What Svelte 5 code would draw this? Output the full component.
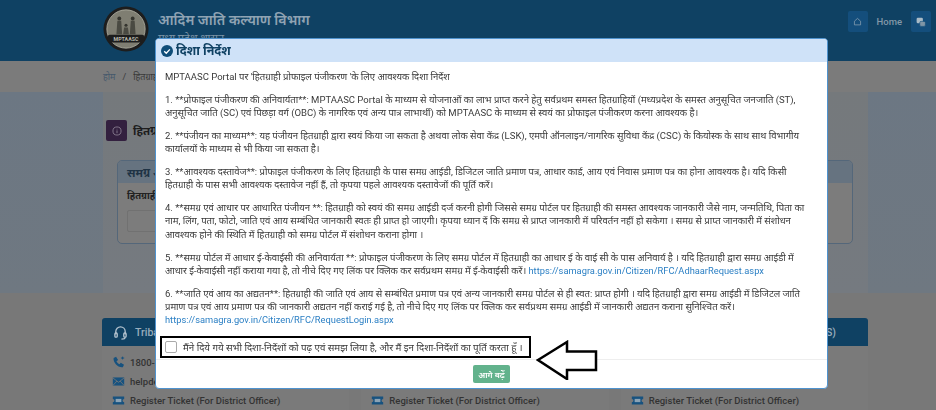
<script>
	const steps = [
		{ text: '1. **प्रोफाइल पंजीकरण की अनिवार्यता**: MPTAASC Portal के माध्यम से योजनाओं का लाभ प्राप्त करने हेतु सर्वप्रथम समस्त हितग्राहियों (मध्यप्रदेश के समस्त अनुसूचित जनजाति (ST), अनुसूचित जाति (SC) एवं पिछड़ा वर्ग (OBC) के नागरिक एवं अन्य पात्र लाभार्थी) को MPTAASC के माध्यम से स्वयं का प्रोफाइल पंजीकरण करना आवश्यक है।' },
		{ text: '2. **पंजीयन का माध्यम**: यह पंजीयन हितग्राही द्वारा स्वयं किया जा सकता है अथवा लोक सेवा केंद्र (LSK), एमपी ऑनलाइन/नागरिक सुविधा केंद्र (CSC) के कियोस्क के साथ साथ विभागीय कार्यालयों के माध्यम से भी किया जा सकता है।' },
		{ text: '3. **आवश्यक दस्तावेज**: प्रोफाइल पंजीकरण के लिए हितग्राही के पास समग्र आईडी, डिजिटल जाति प्रमाण पत्र, आधार कार्ड, आय एवं निवास प्रमाण पत्र का होना आवश्यक है। यदि किसी हितग्राही के पास सभी आवश्यक दस्तावेज नहीं हैं, तो कृपया पहले आवश्यक दस्तावेजों की पूर्ति करें।' },
		{ text: '4. **समग्र एवं आधार पर आधारित पंजीयन **: हितग्राही को स्वयं की समग्र आईडी दर्ज करनी होगी जिससे समग्र पोर्टल पर हितग्राही की समस्त आवश्यक जानकारी जैसे नाम, जन्मतिथि, पिता का नाम, लिंग, पता, फोटो, जाति एवं आय सम्बंधित जानकारी स्वतः ही प्राप्त हो जाएगी। कृपया ध्यान दें कि समग्र से प्राप्त जानकारी में परिवर्तन नहीं हो सकेगा । समग्र से प्राप्त जानकारी में संशोधन आवश्यक होने की स्थिति में हितग्राही को समग्र पोर्टल में संशोधन कराना होगा ।' },
		{ text: '5. **समग्र पोर्टल में आधार ई-केवाईसी की अनिवार्यता **: प्रोफाइल पंजीकरण के लिए समग्र पोर्टल में हितग्राही का आधार ई के वाई सी के पास अनिवार्य है । यदि हितग्राही द्वारा समग्र आईडी में आधार ई-केवाईसी नहीं कराया गया है, तो नीचे दिए गए लिंक पर क्लिक कर सर्वप्रथम समग्र में ई-केवाईसी करें।', link: 'https://samagra.gov.in/Citizen/RFC/AdhaarRequest.aspx' },
		{ text: '6. **जाति एवं आय का अद्यतन**: हितग्राही की जाति एवं आय से सम्बंधित प्रमाण पत्र एवं अन्य जानकारी समग्र पोर्टल से ही स्वत: प्राप्त होगी । यदि हितग्राही द्वारा समग्र आईडी में डिजिटल जाति प्रमाण पत्र एवं आय प्रमाण पत्र की जानकारी अद्यतन नहीं कराई गई है, तो नीचे दिए गए लिंक पर क्लिक कर सर्वप्रथम समग्र आईडी में जानकारी अद्यतन कराना सुनिश्चित करें।', link: 'https://samagra.gov.in/Citizen/RFC/RequestLogin.aspx' }
	];

	const supportCols = [
		{ title: 'Tribal Helpdesk', phone: '1800-233-0000', mail: 'helpdesk@mptaasc.mp.gov.in' },
		{ title: 'Samagra Helpdesk', phone: '1800-233-0000', mail: 'helpdesk@mptaasc.mp.gov.in' },
		{ title: 'Technical Support (MIS)', phone: '1800-233-0000', mail: 'helpdesk@mptaasc.mp.gov.in' }
	];
</script>

<div class="page">
	<header class="topbar">
		<div class="brand">
			<svg class="logo" viewBox="0 0 48 48">
				<circle cx="24" cy="24" r="23.500" fill="#1d1d1d" />
				<circle cx="24" cy="24" r="20" fill="#7f7e72" stroke="#b4b4a8" stroke-width="0.800" />
				<circle cx="17" cy="13" r="2" fill="#34342e" />
				<circle cx="31" cy="13" r="2" fill="#34342e" />
				<circle cx="24" cy="20" r="1.600" fill="#34342e" />
				<path d="M15 15.500h4l1 14h-6zM29 15.500h4l1 14h-6zM22 22.500h4l1 7h-6z" fill="#4a4a42" />
				<rect x="5" y="30" width="38" height="8" rx="2" fill="#1d1d1d" />
				<text x="24" y="36.500" text-anchor="middle" class="logo-text">MPTAASC</text>
			</svg>
			<div class="brand-text">
				<div class="brand-title">आदिम जाति कल्याण विभाग</div>
				<div class="brand-sub">मध्य प्रदेश शासन</div>
			</div>
		</div>
		<nav class="topnav">
			<span class="navbtn">
				<svg viewBox="0 0 16 16" width="9" height="9" fill="none" stroke="#8fa3b3" stroke-width="1.300"><path d="M2.500 7.500 8 2.500l5.500 5V14h-11z" /></svg>
			</span>
			<span class="navlabel">Home</span>
			<span class="navbtn">
				<svg viewBox="0 0 16 16" width="10" height="10" fill="#a9bac6"><rect x="1" y="1" width="10" height="9" rx="2" /><rect x="6" y="7" width="9" height="8" rx="2" fill="#7f95a6" stroke="#144e7c" /></svg>
			</span>
		</nav>
	</header>

	<div class="crumbs">
		<span class="home">होम</span><span class="sep">/</span><span>हितग्राही</span>
	</div>

	<main class="content">
		<div class="wrap">
			<div class="notice">
				<span class="notice-icon">
					<svg viewBox="0 0 16 16" width="10" height="10" fill="none" stroke="#9a8fa0" stroke-width="1.200"><circle cx="8" cy="8" r="6.500" /><path d="M8 7v4.500M8 4.500v1" /></svg>
				</span>
				<strong>हितग्राही</strong>
			</div>
			<section class="panel">
				<div class="panel-head">समग्र आईडी</div>
				<div class="panel-body">
					<div class="field-label">हितग्राही</div>
					<div class="field"></div>
				</div>
			</section>
		</div>
	</main>

	<section class="support">
		{#each supportCols as col}
			<div class="support-col">
				<div class="support-head">
					<svg viewBox="0 0 16 16" width="15" height="15" fill="none" stroke="#b5c4d0" stroke-width="1.400"><path d="M3 10V7a5 5 0 0 1 10 0v3" /><rect x="2" y="8.500" width="2.500" height="4.500" rx="1" /><rect x="11.500" y="8.500" width="2.500" height="4.500" rx="1" /><path d="M13 13c0 1.500-2 2-4 2" /></svg>
					<span>{col.title}</span>
				</div>
				<div class="support-row first">
					<svg class="ic" viewBox="0 0 16 16"><path d="M2 2.500 5 1l2.500 4-2 1.500c.8 1.800 2 3 3.800 3.800l1.500-2 4 2.500-1.500 3C8 15 1 8 2 2.500z" fill="#17527f" /><path d="M11 2.500h4M13 .8v3.400" stroke="#17527f" stroke-width="1.200" /></svg>
					{col.phone}
				</div>
				<div class="support-row">
					<svg class="ic" viewBox="0 0 16 16"><rect x="1" y="3" width="14" height="10" fill="#17527f" /><path d="M1 3.500 8 9l7-5.500M1 13l5-5.500M15 13l-5-5.500" fill="none" stroke="#787878" stroke-width="1" /></svg>
					{col.mail}
				</div>
				<div class="support-row">
					<svg class="ic" viewBox="0 0 16 16"><path d="M1 3h14v3a2 2 0 0 0 0 4v3H1v-3a2 2 0 0 0 0-4z" fill="#17527f" /><rect x="4.500" y="6" width="7" height="4" fill="#8ba3b5" /></svg>
					Register Ticket (For District Officer)
				</div>
			</div>
		{/each}
	</section>
</div>

<div class="dialog">
	<div class="dialog-head">
		<svg viewBox="0 0 16 16" width="12" height="12"><circle cx="8" cy="8" r="8" fill="#0f4d78" /><path d="M4.300 8.300 7 11l4.800-5.200" fill="none" stroke="#fff" stroke-width="1.800" /></svg>
		<h2>दिशा निर्देश</h2>
	</div>
	<div class="dialog-body">
		<p>MPTAASC Portal पर 'हितग्राही प्रोफाइल पंजीकरण 'के लिए आवश्यक दिशा निर्देश</p>
		{#each steps as step}
			<p>
				{step.text}
				{#if step.link}<a href={step.link}>{step.link}</a>{/if}
			</p>
		{/each}
		<label class="agree">
			<span class="box"></span>
			<span>मैंने दिये गये सभी दिशा-निर्देशों को पढ़ एवं समझ लिया है, और मैं इन दिशा-निर्देशों का पूर्ति करता हूँ ।</span>
		</label>
	</div>
	<div class="dialog-foot">
		<button type="button">आगे बढ़ें</button>
	</div>
	<svg class="arrow" viewBox="0 0 62 40" width="62" height="40">
		<path d="M2 20 31 2v9.500h29v18.500H31v9z" fill="#fff" stroke="#000" stroke-width="2.500" />
	</svg>
</div>

<style>
	:global(body) {
		margin: 0;
		background: #6b7784;
		font-family: Roboto, "Noto Sans", "Liberation Sans", sans-serif;
		overflow: hidden;
	}

	.page {
		height: 410px;
		overflow: hidden;
		display: flex;
		flex-direction: column;
		background: #787878;
	}

	.topbar {
		height: 61px;
		flex: none;
		box-sizing: border-box;
		padding: 6px 5px 0 103px;
		display: flex;
		justify-content: space-between;
		background: #0f4163;
	}

	.brand {
		display: flex;
		gap: 9px;
	}

	.logo {
		width: 46px;
		height: 46px;
	}

	.logo-text {
		font-size: 5.500px;
		font-weight: 700;
		fill: #b8b8ac;
	}

	.brand-title {
		margin-top: 4px;
		font-size: 14.200px;
		line-height: 21px;
		font-weight: 600;
		color: #8fa3b3;
	}

	.brand-sub {
		font-size: 11px;
		line-height: 15px;
		color: #7c93a5;
	}

	.topnav {
		display: flex;
		align-items: center;
		gap: 9px;
		height: 21px;
		margin-top: 5px;
		color: #8398a8;
		font-size: 9.500px;
		font-weight: 500;
	}

	.navbtn {
		width: 20px;
		height: 21px;
		border-radius: 2px;
		background: #144e7c;
		display: flex;
		align-items: center;
		justify-content: center;
	}

	.crumbs {
		height: 31px;
		flex: none;
		box-sizing: border-box;
		padding-left: 103px;
		display: flex;
		align-items: center;
		gap: 7px;
		background: #7b7b7b;
		color: #383838;
		font-size: 9px;
	}

	.home {
		color: #45586b;
	}

	.content {
		height: 201px;
		flex: none;
		padding-left: 103px;
		background: linear-gradient(#6c7783, #6f7881);
	}

	.wrap {
		width: 765px;
		height: 100%;
		box-sizing: border-box;
		padding: 28px 0 0 3px;
		background: linear-gradient(#75797c, #757a80);
	}

	.notice {
		display: flex;
		align-items: center;
		gap: 6px;
		height: 21px;
		font-size: 11.500px;
		color: #1d1d1d;
	}

	.notice-icon {
		width: 21px;
		height: 21px;
		border-radius: 2px;
		background: #33203f;
		display: flex;
		align-items: center;
		justify-content: center;
	}

	.panel {
		margin: 19px 0 0 11px;
		width: 736px;
		height: 84px;
		box-sizing: border-box;
		border: 1.500px solid #54677a;
		border-radius: 5px;
		overflow: hidden;
		background: #7c7c7c;
	}

	.panel-head {
		height: 22px;
		box-sizing: border-box;
		padding: 0 9px;
		display: flex;
		align-items: center;
		background: #667380;
		color: #1f3345;
		font-size: 11.500px;
		font-weight: 700;
	}

	.panel-body {
		padding: 6px 9px;
	}

	.field-label {
		font-size: 9.500px;
		line-height: 14px;
		font-weight: 700;
		color: #222;
	}

	.field {
		margin-top: 7px;
		height: 20px;
		width: 200px;
		border: 1px solid #717171;
		border-radius: 2px;
	}

	.support {
		flex: none;
		width: 766px;
		box-sizing: border-box;
		margin-left: 102px;
		padding-top: 25px;
		display: grid;
		grid-template-columns: repeat(3, 1fr);
		gap: 12px;
		color: #333;
		font-size: 9.500px;
	}

	.support-col {
		background: #7a7a7a;
		min-width: 0;
	}

	.support-head {
		height: 28px;
		padding: 0 11px;
		display: flex;
		align-items: center;
		justify-content: space-between;
		border-radius: 3px 3px 0 0;
		background: #0f4163;
		color: #9aaebd;
		font-size: 10.500px;
		font-weight: 500;
	}

	.support-head span {
		flex: 1;
		margin-left: 7px;
		text-align: right;
		padding-right: 21px;
	}

	.support-col:nth-child(1) .support-head span {
		text-align: left;
	}

	.support-row {
		height: 19px;
		padding: 0 10px;
		display: flex;
		align-items: center;
		gap: 5px;
		font-weight: 500;
		white-space: nowrap;
	}

	.support-row.first {
		margin-top: 7px;
	}

	.ic {
		width: 13px;
		height: 13px;
		flex: none;
	}

	.dialog {
		position: fixed;
		left: 155px;
		top: 38px;
		width: 673px;
		height: 351px;
		box-sizing: border-box;
		display: flex;
		flex-direction: column;
		background: #fff;
		border: 1px solid #4f93cf;
		border-radius: 4px;
		color: #3a3a3a;
		font-size: 9.530px;
	}

	.dialog-head {
		height: 23px;
		flex: none;
		display: flex;
		align-items: center;
		gap: 3px;
		padding-left: 5px;
		border-radius: 3px 3px 0 0;
		background: #cfe2f8;
	}

	h2 {
		margin: 0;
		color: #0f4163;
		font-size: 12.500px;
		font-weight: 700;
	}

	.dialog-body {
		flex: 1;
		padding: 8px 12px 0 9px;
		min-height: 0;
	}

	p {
		margin: 0 0 9.300px;
		line-height: 13.400px;
	}

	a {
		color: #2a7fc4;
		font-size: 9.300px;
		text-decoration: none;
	}

	.agree {
		display: flex;
		align-items: center;
		gap: 6px;
		box-sizing: border-box;
		height: 22px;
		width: 371px;
		margin: 3px 0 0 -5px;
		padding-left: 3px;
		border: 2.500px solid #000;
		font-size: 9.750px;
		white-space: nowrap;
	}

	.box {
		width: 10px;
		height: 10px;
		flex: none;
		border: 1px solid #aaa;
		border-radius: 2px;
	}

	.dialog-foot {
		height: 28px;
		flex: none;
		display: flex;
		justify-content: center;
		align-items: center;
		border-top: 1px solid #eee;
	}

	button {
		width: 37px;
		height: 18px;
		padding: 0;
		border: 0;
		border-radius: 2px;
		background: #62b28c;
		color: #fff;
		font: 600 8.500px Roboto, "Noto Sans", sans-serif;
		white-space: nowrap;
	}

	.arrow {
		position: absolute;
		left: 380px;
		top: 301px;
	}
</style>
